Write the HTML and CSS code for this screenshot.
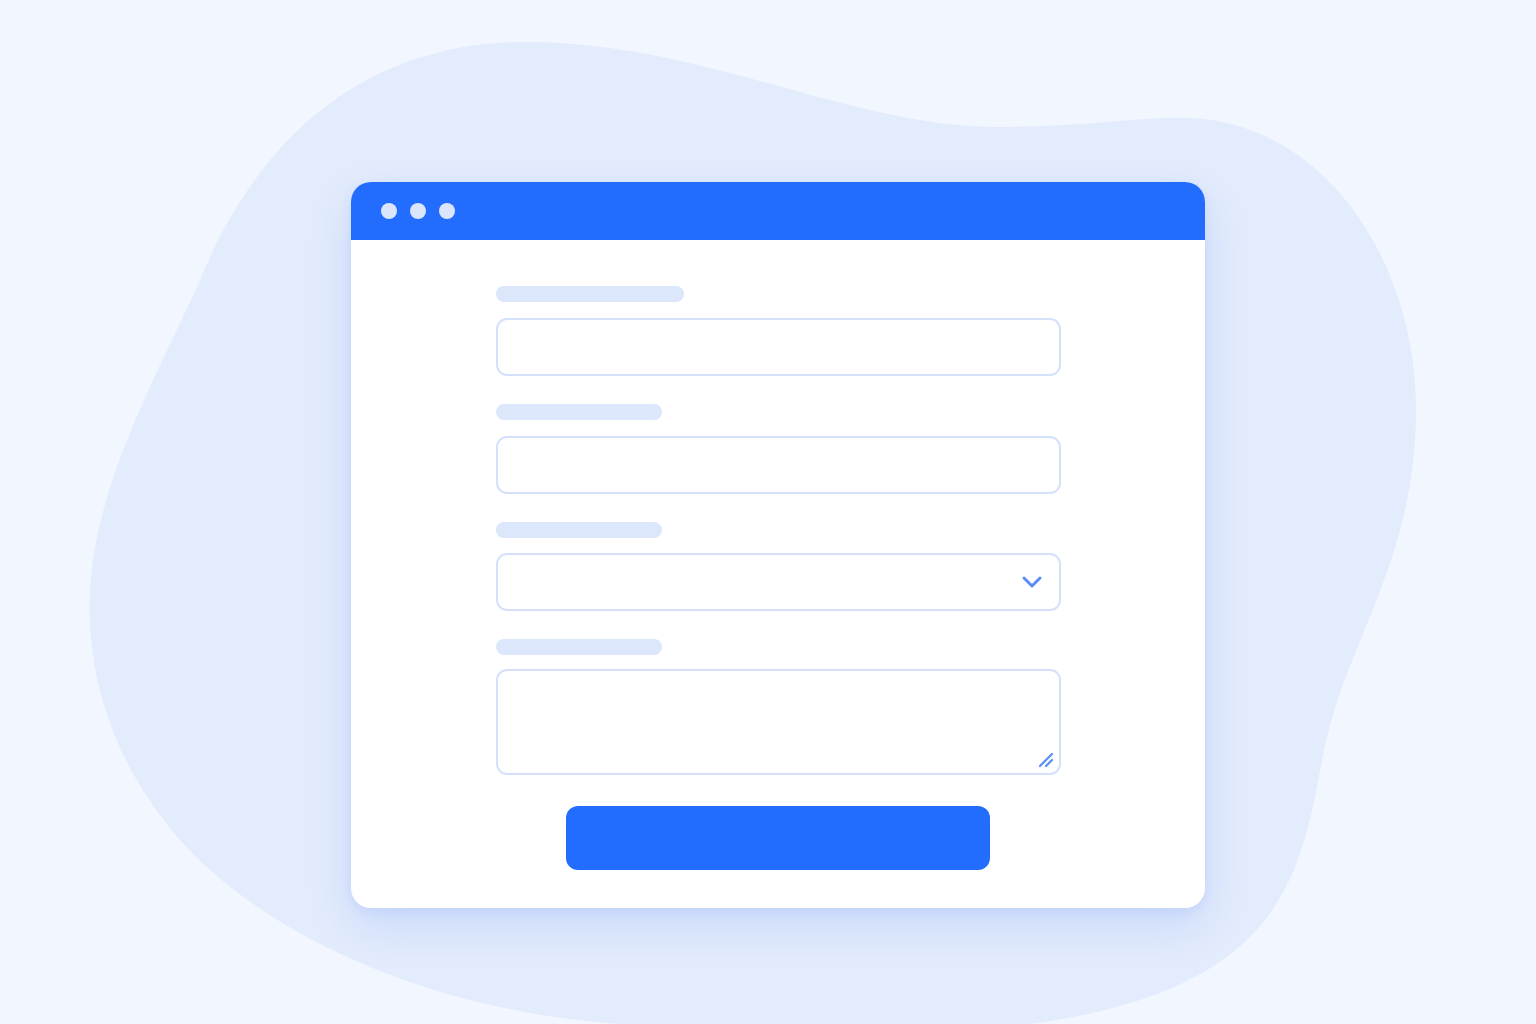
FILE: index.html
```html
<!DOCTYPE html>
<html lang="en">
<head>
<meta charset="utf-8">
<title>Form window</title>
<link rel="stylesheet" href="styles.css">
</head>
<body>
<svg class="blob" width="1536" height="1024" viewBox="0 0 1536 1024" aria-hidden="true">
  <path d="M 520 42 C 700 40, 850 128, 1000 127 C 1100 126, 1140 116, 1190 118 C 1330 124, 1420 270, 1416 420 C 1412 570, 1345 640, 1322 760 C 1300 880, 1280 990, 1030 1024 L 620 1024 C 420 1010, 260 930, 180 840 C 110 760, 86 670, 90 590 C 96 480, 160 370, 200 280 C 270 110, 390 44, 520 42 Z" fill="#e3ecfc"/>
</svg>
<main class="window">
  <header class="titlebar">
    <span class="dot"></span><span class="dot"></span><span class="dot"></span>
  </header>
  <section class="content">
    <form class="form">
      <div class="field">
        <div class="label label-wide"></div>
        <div class="input"></div>
      </div>
      <div class="field">
        <div class="label"></div>
        <div class="input"></div>
      </div>
      <div class="field field-select">
        <div class="label"></div>
        <div class="input select">
          <svg class="chevron" width="22" height="14" viewBox="0 0 22 14"><path d="M3 3 L11 11 L19 3" fill="none" stroke="#5b8ef5" stroke-width="3" stroke-linecap="round" stroke-linejoin="round"/></svg>
        </div>
      </div>
      <div class="field field-last">
        <div class="label"></div>
        <div class="input textarea">
          <svg class="grip" width="16" height="16" viewBox="0 0 16 16"><path d="M2 14 L14 2 M8 14 L14 8" fill="none" stroke="#5b8ef5" stroke-width="2.2" stroke-linecap="round"/></svg>
        </div>
      </div>
      <div class="button"></div>
    </form>
  </section>
</main>
</body>
</html>
```
FILE: styles.css
```css
html, body {
  margin: 0;
  padding: 0;
}
body {
  width: 1536px;
  height: 1024px;
  overflow: hidden;
  background: #f2f6fe;
  font-family: "Liberation Sans", Arial, sans-serif;
  position: relative;
}
.blob {
  position: absolute;
  left: 0;
  top: 0;
  z-index: 0;
}
.window {
  position: relative;
  z-index: 1;
  width: 854px;
  height: 726px;
  margin: 182px 0 0 351px;
  background: #ffffff;
  border-radius: 20px;
  overflow: hidden;
  box-shadow: 0 18px 44px rgba(60, 110, 240, 0.16), 0 4px 12px rgba(60, 110, 240, 0.08);
  display: flex;
  flex-direction: column;
}
.titlebar {
  height: 58px;
  background: #226dfd;
  display: flex;
  align-items: center;
  gap: 13px;
  padding-left: 30px;
  box-sizing: border-box;
  flex: none;
}
.dot {
  width: 16px;
  height: 16px;
  border-radius: 50%;
  background: #dbe6fd;
}
.content {
  flex: 1;
  padding-top: 46px;
  display: flex;
  justify-content: center;
}
.form {
  width: 565px;
  margin: 0;
  display: flex;
  flex-direction: column;
}
.field {
  display: flex;
  flex-direction: column;
  gap: 16px;
  margin-bottom: 28px;
}
.field-select {
  gap: 15px;
}
.field-last {
  gap: 14px;
  margin-bottom: 31px;
}
.label {
  width: 166px;
  height: 16px;
  border-radius: 8px;
  background: #dce7fb;
}
.label-wide {
  width: 188px;
}
.input {
  height: 58px;
  box-sizing: border-box;
  border: 2px solid #d5e1fa;
  border-radius: 11px;
  background: #ffffff;
  position: relative;
}
.select {
  display: flex;
  align-items: center;
  justify-content: flex-end;
  padding-right: 16px;
}
.chevron {
  display: block;
}
.textarea {
  height: 106px;
}
.grip {
  position: absolute;
  right: 5px;
  bottom: 5px;
}
.button {
  width: 424px;
  height: 64px;
  align-self: center;
  border-radius: 12px;
  background: #226dfd;
}
```
